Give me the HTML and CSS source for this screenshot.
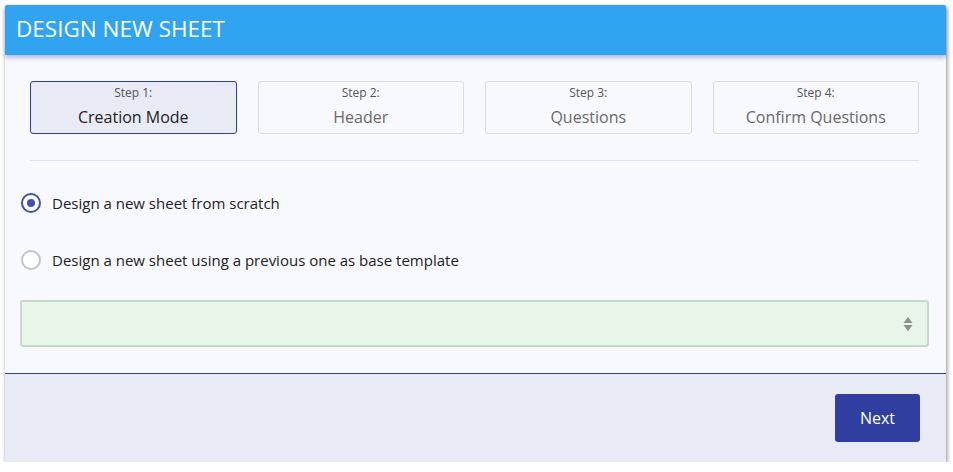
FILE: index.html
```html
<!DOCTYPE html>
<html>
<head>
<meta charset="utf-8">
<link rel="stylesheet" href="styles.css">
</head>
<body>
<div class="card">
  <div class="card-header">DESIGN NEW SHEET</div>
  <div class="card-body">
    <div class="steps">
      <div class="step active"><div class="step-label">Step 1:</div><div class="step-name">Creation Mode</div></div>
      <div class="step"><div class="step-label">Step 2:</div><div class="step-name">Header</div></div>
      <div class="step"><div class="step-label">Step 3:</div><div class="step-name">Questions</div></div>
      <div class="step"><div class="step-label">Step 4:</div><div class="step-name">Confirm Questions</div></div>
    </div>
    <div class="divider"></div>
    <div class="option first"><span class="radio checked"></span><span class="option-text">Design a new sheet from scratch</span></div>
    <div class="option second"><span class="radio"></span><span class="option-text">Design a new sheet using a previous one as base template</span></div>
    <div class="select">
      <svg class="select-arrows" width="10" height="16" viewBox="0 0 10 16"><path d="M5 1 L9.5 7 L0.5 7 Z M0.5 9 L9.5 9 L5 15 Z" fill="#8a8f8a"/></svg>
    </div>
  </div>
  <div class="card-footer">
    <button class="btn-next">Next</button>
  </div>
</div>
</body>
</html>
```
FILE: styles.css
```css
* { box-sizing: border-box; }
body {
  margin: 0;
  background: #ffffff;
  font-family: "Open Sans", "Noto Sans", sans-serif;
}
.card {
  margin: 5px 0 0 5px;
  width: 941px;
  height: 457px;
  background: #f8f9fe;
  box-shadow: 1px 2px 4px rgba(0,0,0,0.45);
  display: flex;
  flex-direction: column;
  border-radius: 2px 2px 0 0;
}
.card-header {
  height: 50px;
  background: #30a3f1;
  color: #ffffff;
  font-size: 22.5px;
  display: flex;
  align-items: center;
  padding: 0 11px;
  padding-bottom: 3px;
  box-shadow: 0 3px 4px rgba(70,70,170,0.35);
  border-radius: 2px 2px 0 0;
  position: relative;
  z-index: 1;
}
.card-body {
  padding: 26px 17px 26px 15px;
  flex: none;
}
.steps {
  margin: 0 10px;
  display: grid;
  grid-template-columns: repeat(4, 1fr);
  gap: 21px;
}
.step {
  height: 53px;
  border: 1px solid #dcdde3;
  border-radius: 3px;
  background: #f8f9fe;
  text-align: center;
  padding-top: 2px;
}
.step.active {
  background: #e8eaf6;
  border-color: #303f9f;
}
.step-label {
  font-size: 12px;
  color: #555555;
  line-height: 18px;
}
.step-name {
  font-size: 16px;
  color: #6a6a6a;
  line-height: 30px;
}
.step.active .step-name { color: #222222; }
.divider {
  margin: 26px 10px 0 10px;
  height: 1px;
  background: #dfe0e5;
}
.option {
  display: flex;
  align-items: center;
  height: 20px;
  font-size: 15px;
  color: #222222;
  padding-left: 1px;
}
.option.first { margin-top: 32px; }
.option.second { margin-top: 37px; }
.radio {
  width: 20px;
  height: 20px;
  border-radius: 50%;
  border: 2px solid #c4c4c4;
  background: #ffffff;
  margin-right: 11px;
  display: flex;
  align-items: center;
  justify-content: center;
  flex: none;
}
.radio.checked {
  border-color: #3f51b5;
}
.radio.checked::after {
  content: "";
  width: 8px;
  height: 8px;
  border-radius: 50%;
  background: #3f51b5;
}
.select {
  margin-top: 30px;
  height: 47px;
  background: #e8f5e9;
  border: 2px solid #c9d7ca;
  border-radius: 3px;
  display: flex;
  align-items: center;
  justify-content: flex-end;
  padding-right: 14px;
}
.card-footer {
  flex: 1;
  background: #e8eaf6;
  border-top: 1px solid #303f9f;
  display: flex;
  justify-content: flex-end;
  align-items: flex-start;
  padding: 20px 26px 0 0;
}
.btn-next {
  width: 85px;
  height: 48px;
  background: #303f9f;
  color: #ffffff;
  border: none;
  border-radius: 3px;
  font-family: "Open Sans", "Noto Sans", sans-serif;
  font-size: 16px;
}
```
